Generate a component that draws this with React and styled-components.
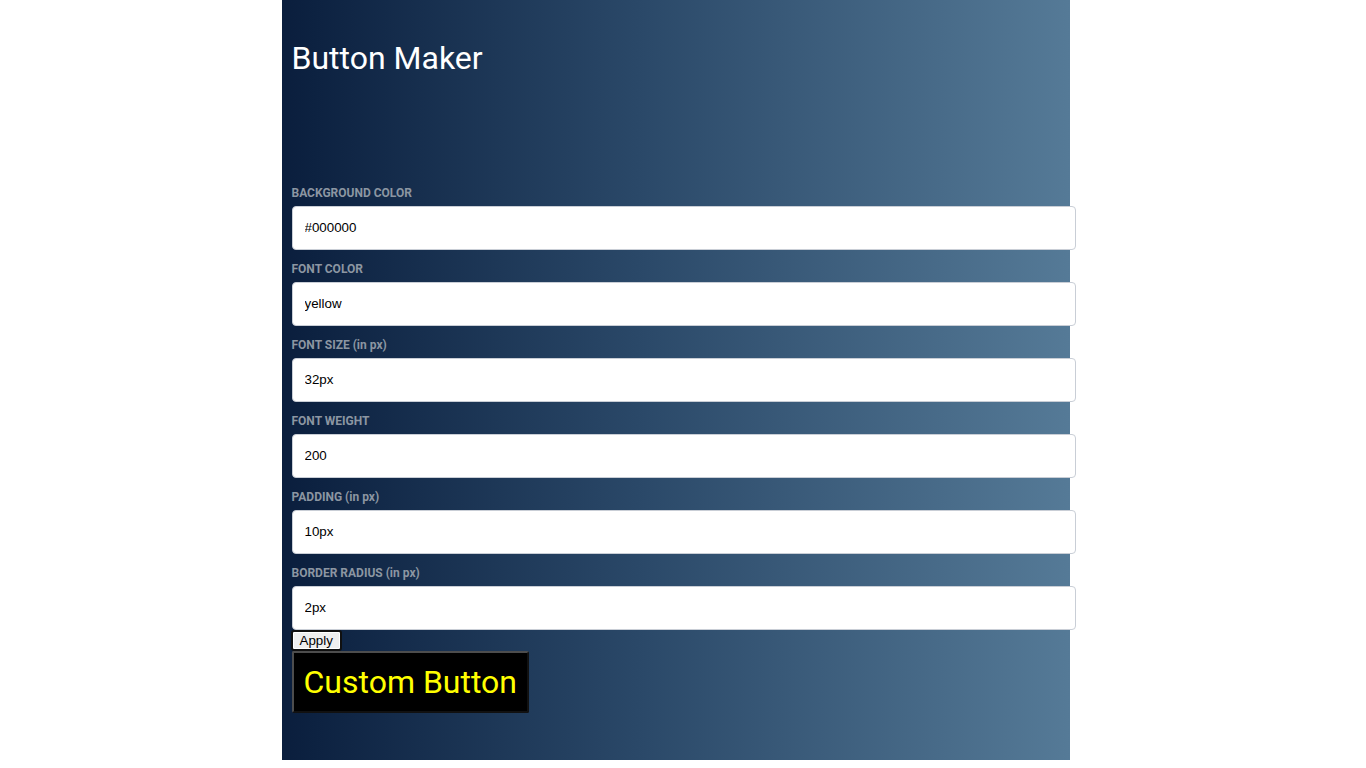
import React, { useEffect } from "react";
import styled, { createGlobalStyle } from "styled-components";

const Global = createGlobalStyle`
  html { overflow-y: scroll; }
  body {
    margin: 8px 23px 8px 8px;
    background: #ffffff;
    font-family: "Roboto", "Liberation Sans", sans-serif;
  }
`;

const Page = styled.div`
  width: 788px;
  margin: 0 auto;
  box-sizing: border-box;
  padding: 0 10px 47px;
  background: linear-gradient(to right, #0a1e3d 0%, #2a4868 45%, #557a97 100%);
`;

const Header = styled.header`
  padding-top: 84px;
  margin-bottom: 97px;
`;

const Title = styled.h1`
  margin: 0;
  font-family: "Roboto", "Liberation Sans", sans-serif;
  font-size: 32px;
  line-height: 38px;
  font-weight: 400;
  color: #ffffff;
`;

const Form = styled.form`
  display: flex;
  flex-direction: column;
  align-items: flex-start;
`;

const Label = styled.label`
  display: block;
  margin: 12px 0 6px;
  font-family: "Roboto", "Liberation Sans", sans-serif;
  font-size: 12px;
  line-height: 14px;
  font-weight: 700;
  color: #8c96a2;
`;

const Input = styled.input`
  box-sizing: border-box;
  width: 784px;
  height: 44px;
  padding: 0 12px 2px;
  border: 1px solid #c9ced6;
  border-radius: 4px;
  background: #ffffff;
  font-family: "Liberation Sans", Arial, sans-serif;
  font-size: 13.33px;
  color: #000000;
  outline: none;
`;

const ApplyButton = styled.button`
  box-sizing: border-box;
  margin-left: -1px;
  height: 21px;
  padding: 0 7px;
  border: 2px solid #101010;
  border-radius: 3px;
  box-shadow: inset 0 0 0 1px #ffffff;
  background: #efefef;
  font-family: "Liberation Sans", Arial, sans-serif;
  font-size: 13.33px;
  line-height: 15px;
  color: #000000;
`;

const CustomButton = styled.button`
  background: ${(p) => p.$bg};
  color: ${(p) => p.$color};
  font-size: ${(p) => p.$size};
  padding: ${(p) => p.$pad};
  border-radius: ${(p) => p.$radius};
  font-family: "Roboto", "Liberation Sans", sans-serif;
  font-weight: 400;
  line-height: 38px;
  border-width: 2px;
  border-style: solid;
  border-color: #4d4d4d #111111 #111111 #4d4d4d;
`;

const fields = [
  { label: "BACKGROUND COLOR", value: "#000000" },
  { label: "FONT COLOR", value: "yellow" },
  { label: "FONT SIZE (in px)", value: "32px" },
  { label: "FONT WEIGHT", value: "200" },
  { label: "PADDING (in px)", value: "10px" },
  { label: "BORDER RADIUS (in px)", value: "2px" },
];

export default function App() {
  useEffect(() => {
    const go = () => window.scrollTo(0, document.documentElement.scrollHeight);
    go();
    requestAnimationFrame(go);
  }, []);

  return (
    <>
      <Global />
      <Page>
        <Header>
          <Title>Button Maker</Title>
        </Header>
        <Form onSubmit={(e) => e.preventDefault()}>
          {fields.map((f) => (
            <React.Fragment key={f.label}>
              <Label>{f.label}</Label>
              <Input defaultValue={f.value} />
            </React.Fragment>
          ))}
          <ApplyButton type="submit">Apply</ApplyButton>
          <CustomButton
            type="button"
            $bg="#000000"
            $color="yellow"
            $size="32px"
            $pad="10px"
            $radius="2px"
          >
            Custom Button
          </CustomButton>
        </Form>
      </Page>
    </>
  );
}
